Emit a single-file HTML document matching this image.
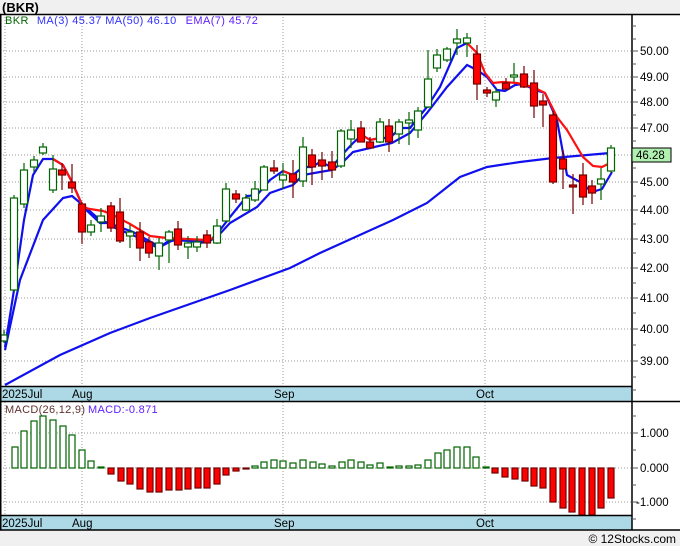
<!DOCTYPE html>
<html><head><meta charset="utf-8"><style>
html,body{margin:0;padding:0;background:#fff;}
svg{display:block;font-family:"Liberation Sans","DejaVu Sans",sans-serif;}
</style></head><body>
<svg width="680" height="546" viewBox="0 0 680 546" xmlns="http://www.w3.org/2000/svg">
<rect x="0" y="0" width="680" height="14" fill="#f0f0f0"/>
<text x="2" y="12" font-size="13" font-weight="bold" fill="#000">(BKR)</text>
<rect x="0" y="530" width="680" height="16" fill="#f0f0f0"/>
<text x="676" y="543" font-size="12" text-anchor="end" fill="#000">© 12Stocks.com</text>

<g stroke="#999" stroke-dasharray="1,2" stroke-width="1">
<line x1="0" y1="51" x2="632" y2="51"/><line x1="0" y1="77" x2="632" y2="77"/>
<line x1="0" y1="102" x2="632" y2="102"/><line x1="0" y1="128" x2="632" y2="128"/>
<line x1="0" y1="155" x2="632" y2="155"/><line x1="0" y1="182" x2="632" y2="182"/>
<line x1="0" y1="210" x2="632" y2="210"/><line x1="0" y1="239" x2="632" y2="239"/>
<line x1="0" y1="268" x2="632" y2="268"/><line x1="0" y1="298" x2="632" y2="298"/>
<line x1="0" y1="329" x2="632" y2="329"/><line x1="0" y1="361" x2="632" y2="361"/>
<line x1="5" y1="14" x2="5" y2="386"/><line x1="82" y1="14" x2="82" y2="386"/>
<line x1="283" y1="14" x2="283" y2="386"/><line x1="485" y1="14" x2="485" y2="386"/>
<line x1="0" y1="433" x2="632" y2="433"/><line x1="0" y1="468" x2="632" y2="468"/><line x1="0" y1="502" x2="632" y2="502"/>
<line x1="5" y1="402" x2="5" y2="516"/><line x1="82" y1="402" x2="82" y2="516"/>
<line x1="283" y1="402" x2="283" y2="516"/><line x1="485" y1="402" x2="485" y2="516"/>
</g>

<text x="5" y="24" font-size="11" letter-spacing="0.4" fill="#060"><tspan>BKR</tspan><tspan fill="#3030ff" dx="8">MA(3)  45.37  MA(50)  46.10</tspan><tspan fill="#6020ff" dx="9">EMA(7)  45.72</tspan></text>

<polyline fill="none" stroke="#1010ee" stroke-width="2.2" points="5,385 60,355 110,333 150,318 230,290 290,268 320,253 393,220 427,203 460,177 487,167 520,162 553,158 610,153"/>
<polyline fill="none" stroke="#1010ee" stroke-width="2.2" points="5,350 20,280 43,220 63,198 72,196 85,207 100,220 133,232 160,247 173,240 207,242 217,237 230,223 257,207 270,193 287,187 293,185 303,175 320,172 332,170 342,163 353,152 370,148 392,143 410,133 427,113 447,87 467,65 477,70 487,77 497,90 505,91 515,85 523,84 535,90 545,93 557,120 567,175 580,182 592,192 602,189 612,172"/>
<polyline fill="none" stroke="#1010ee" stroke-width="2.2" points="5,347 14,290 24,220 33,175 43,159 53,159 63,165 72,182 83,207 100,223 110,223 113,227 137,237 158,248 167,242 180,239 200,243 210,241 220,230 230,217 247,196 257,195 270,180 283,171 293,175 303,167 312,167 320,162 332,167 340,157 353,143 362,135 370,140 380,138 390,138 400,128 410,128 427,107 440,87 457,48 467,43"/>
<g fill="none" stroke="#ff1010" stroke-width="2.2">
<polyline points="53,159 63,165 72,182 83,207 90,209 103,211 113,215 130,224 150,236 167,238 207,240 217,237"/>
<polyline points="467,43 477,53 485,73 493,83 503,82 517,83 533,87 545,93 557,117 567,130 583,157 593,166 602,167 610,163"/>
<polyline points="283,171 293,175"/>
<polyline points="362,135 370,140 380,138"/>
</g>

<g stroke-width="1.2">
<g stroke="#006400" fill="#fff">
<line x1="4" y1="330" x2="4" y2="343"/><rect x="1" y="335" width="6" height="6"/>
<line x1="14" y1="195" x2="14" y2="292"/><rect x="10.5" y="198" width="7" height="92"/>
<line x1="24" y1="163" x2="24" y2="208"/><rect x="20.5" y="170" width="7" height="34"/>
<line x1="34" y1="156" x2="34" y2="172"/><rect x="30.5" y="160" width="7" height="7"/>
<line x1="43" y1="143" x2="43" y2="155"/><rect x="39.5" y="147" width="7" height="6"/>
<line x1="53" y1="155" x2="53" y2="193"/><rect x="49.5" y="169" width="7" height="21"/>
<line x1="91" y1="220" x2="91" y2="236"/><rect x="87.5" y="225" width="7" height="7"/>
<line x1="101" y1="208" x2="101" y2="232"/><rect x="97.5" y="216" width="7" height="6"/>
<line x1="130" y1="225" x2="130" y2="248"/><rect x="126.5" y="232" width="7" height="4"/>
<line x1="159" y1="238" x2="159" y2="270"/><rect x="155.5" y="243" width="7" height="13"/>
<line x1="169" y1="230" x2="169" y2="263"/><rect x="165.5" y="232" width="7" height="8"/>
<line x1="188" y1="236" x2="188" y2="259"/><rect x="184.5" y="243" width="7" height="4"/>
<line x1="197" y1="236" x2="197" y2="252"/><rect x="193.5" y="242" width="7" height="5"/>
<line x1="217" y1="219" x2="217" y2="244"/><rect x="213.5" y="226" width="7" height="17"/>
<line x1="226" y1="183" x2="226" y2="222"/><rect x="222.5" y="189" width="7" height="32"/>
<line x1="246" y1="194" x2="246" y2="211"/><rect x="242.5" y="198" width="7" height="12"/>
<line x1="255" y1="181" x2="255" y2="202"/><rect x="251.5" y="189" width="7" height="11"/>
<line x1="264" y1="165" x2="264" y2="190"/><rect x="260.5" y="167" width="7" height="23"/>
<line x1="283" y1="163" x2="283" y2="189"/><rect x="279.5" y="175" width="7" height="5"/>
<line x1="303" y1="137" x2="303" y2="187"/><rect x="299.5" y="147" width="7" height="34"/>
<line x1="341" y1="129" x2="341" y2="168"/><rect x="337.5" y="131" width="7" height="35"/>
<line x1="351" y1="120" x2="351" y2="148"/><rect x="347.5" y="130" width="7" height="9"/>
<line x1="380" y1="118" x2="380" y2="143"/><rect x="376.5" y="122" width="7" height="20"/>
<line x1="399" y1="119" x2="399" y2="144"/><rect x="395.5" y="122" width="7" height="12"/>
<line x1="409" y1="112" x2="409" y2="145"/><rect x="405.5" y="120" width="7" height="3"/>
<line x1="418" y1="107" x2="418" y2="138"/><rect x="414.5" y="111" width="7" height="19"/>
<line x1="428" y1="50" x2="428" y2="108"/><rect x="424.5" y="79" width="7" height="28"/>
<line x1="437" y1="49" x2="437" y2="72"/><rect x="433.5" y="55" width="7" height="13"/>
<line x1="447" y1="47" x2="447" y2="62"/><rect x="443.5" y="49" width="7" height="11"/>
<line x1="457" y1="29" x2="457" y2="55"/><rect x="453.5" y="39" width="7" height="4"/>
<line x1="467" y1="33" x2="467" y2="57"/><rect x="463.5" y="38" width="7" height="5"/>
<line x1="496" y1="88" x2="496" y2="107"/><rect x="492.5" y="92" width="7" height="8"/>
<line x1="514" y1="63" x2="514" y2="82"/><rect x="510.5" y="75" width="7" height="2"/>
<line x1="601" y1="168" x2="601" y2="200"/><rect x="597.5" y="179" width="7" height="5"/>
<line x1="611" y1="145" x2="611" y2="173"/><rect x="607.5" y="148" width="7" height="23"/>
</g>
<g stroke="#700000" fill="#f00">
<line x1="62" y1="163" x2="62" y2="190"/><rect x="58.5" y="170" width="7" height="5"/>
<line x1="72" y1="164" x2="72" y2="193"/><rect x="68.5" y="182" width="7" height="6"/>
<line x1="82" y1="202" x2="82" y2="244"/><rect x="78.5" y="204" width="7" height="28"/>
<line x1="111" y1="202" x2="111" y2="232"/><rect x="107.5" y="206" width="7" height="22"/>
<line x1="120" y1="198" x2="120" y2="243"/><rect x="116.5" y="212" width="7" height="29"/>
<line x1="140" y1="222" x2="140" y2="261"/><rect x="136.5" y="232" width="7" height="16"/>
<line x1="149" y1="237" x2="149" y2="258"/><rect x="145.5" y="242" width="7" height="11"/>
<line x1="178" y1="221" x2="178" y2="250"/><rect x="174.5" y="229" width="7" height="16"/>
<line x1="207" y1="230" x2="207" y2="248"/><rect x="203.5" y="235" width="7" height="8"/>
<line x1="236" y1="190" x2="236" y2="203"/><rect x="232.5" y="194" width="7" height="5"/>
<line x1="274" y1="160" x2="274" y2="174"/><rect x="270.5" y="168" width="7" height="3"/>
<line x1="293" y1="160" x2="293" y2="198"/><rect x="289.5" y="174" width="7" height="8"/>
<line x1="312" y1="149" x2="312" y2="185"/><rect x="308.5" y="155" width="7" height="12"/>
<line x1="322" y1="152" x2="322" y2="180"/><rect x="318.5" y="160" width="7" height="6"/>
<line x1="332" y1="151" x2="332" y2="178"/><rect x="328.5" y="162" width="7" height="8"/>
<line x1="361" y1="121" x2="361" y2="142"/><rect x="357.5" y="128" width="7" height="14"/>
<line x1="370" y1="137" x2="370" y2="148"/><rect x="366.5" y="142" width="7" height="6"/>
<line x1="389" y1="119" x2="389" y2="152"/><rect x="385.5" y="126" width="7" height="16"/>
<line x1="477" y1="45" x2="477" y2="100"/><rect x="473.5" y="54" width="7" height="30"/>
<line x1="487" y1="87" x2="487" y2="97"/><rect x="483.5" y="90" width="7" height="3"/>
<line x1="506" y1="78" x2="506" y2="90"/><rect x="502.5" y="83" width="7" height="6"/>
<line x1="524" y1="66" x2="524" y2="88"/><rect x="520.5" y="74" width="7" height="13"/>
<line x1="534" y1="70" x2="534" y2="118"/><rect x="530.5" y="83" width="7" height="23"/>
<line x1="543" y1="94" x2="543" y2="127"/><rect x="539.5" y="101" width="7" height="4"/>
<line x1="553" y1="111" x2="553" y2="184"/><rect x="549.5" y="115" width="7" height="67"/>
<line x1="563" y1="150" x2="563" y2="189"/><rect x="559.5" y="159" width="7" height="10"/>
<line x1="573" y1="174" x2="573" y2="214"/><rect x="569.5" y="185" width="7" height="2"/>
<line x1="583" y1="163" x2="583" y2="205"/><rect x="579.5" y="175" width="7" height="22"/>
<line x1="592" y1="180" x2="592" y2="204"/><rect x="588.5" y="186" width="7" height="7"/>
</g>
</g>

<g stroke="#006400" fill="#fff" stroke-width="1.2">
<rect x="12" y="447" width="6" height="21"/><rect x="21" y="431" width="6" height="37"/>
<rect x="31" y="421" width="6" height="47"/><rect x="40" y="416" width="6" height="52"/>
<rect x="50" y="420" width="6" height="48"/><rect x="60" y="426" width="6" height="42"/>
<rect x="69" y="435" width="6" height="33"/><rect x="79" y="450" width="6" height="18"/>
<rect x="88" y="461" width="6" height="7"/><rect x="98" y="467" width="6" height="1"/>
<rect x="252" y="466" width="6" height="2"/><rect x="261" y="462" width="6" height="6"/>
<rect x="271" y="460" width="6" height="8"/><rect x="280" y="461" width="6" height="7"/>
<rect x="290" y="463" width="6" height="5"/><rect x="300" y="460" width="6" height="8"/>
<rect x="310" y="462" width="6" height="6"/><rect x="319" y="464" width="6" height="4"/>
<rect x="329" y="466" width="6" height="2"/><rect x="339" y="462" width="6" height="6"/>
<rect x="348" y="460" width="6" height="8"/><rect x="358" y="462" width="6" height="6"/>
<rect x="367" y="465" width="6" height="3"/><rect x="377" y="463" width="6" height="5"/>
<rect x="387" y="467" width="6" height="1"/><rect x="396" y="466" width="6" height="2"/>
<rect x="406" y="466" width="6" height="2"/><rect x="415" y="465" width="6" height="3"/>
<rect x="425" y="460" width="6" height="8"/><rect x="435" y="453" width="6" height="15"/>
<rect x="444" y="450" width="6" height="18"/><rect x="454" y="447" width="6" height="21"/>
<rect x="464" y="447" width="6" height="21"/><rect x="473" y="457" width="6" height="11"/>
<rect x="483" y="467" width="6" height="1"/>
</g>
<g stroke="#700000" fill="#f00" stroke-width="1.2">
<rect x="108" y="468" width="6" height="6"/><rect x="118" y="468" width="6" height="13"/>
<rect x="127" y="468" width="6" height="16"/><rect x="137" y="468" width="6" height="21"/>
<rect x="147" y="468" width="6" height="24"/><rect x="156" y="468" width="6" height="24"/>
<rect x="166" y="468" width="6" height="22"/><rect x="176" y="468" width="6" height="22"/>
<rect x="185" y="468" width="6" height="21"/><rect x="195" y="468" width="6" height="20"/>
<rect x="204" y="468" width="6" height="20"/><rect x="214" y="468" width="6" height="16"/>
<rect x="223" y="468" width="6" height="7"/><rect x="233" y="468" width="6" height="3"/>
<rect x="243" y="468" width="6" height="1"/>
<rect x="492" y="468" width="6" height="5"/><rect x="502" y="468" width="6" height="9"/>
<rect x="512" y="468" width="6" height="11"/><rect x="522" y="468" width="6" height="13"/>
<rect x="531" y="468" width="6" height="18"/><rect x="540" y="468" width="6" height="20"/>
<rect x="550" y="468" width="6" height="34"/><rect x="560" y="468" width="6" height="40"/>
<rect x="569" y="468" width="6" height="44"/><rect x="579" y="468" width="6" height="47"/>
<rect x="589" y="468" width="6" height="47"/><rect x="598" y="468" width="6" height="40"/>
<rect x="608" y="468" width="6" height="30"/>
</g>
<text x="5" y="413" font-size="11" letter-spacing="0.3" fill="#603030">MACD(26,12,9)</text>
<text x="88" y="413" font-size="11" letter-spacing="0.3" fill="#6020ff">MACD:-0.871</text>

<rect x="0" y="387" width="632" height="14" fill="#add8e6"/>
<rect x="0" y="516" width="632" height="14" fill="#add8e6"/>
<g font-size="11.5" fill="#000">
<text x="2" y="398">2025Jul</text><text x="72" y="398">Aug</text><text x="274" y="398">Sep</text><text x="476" y="398">Oct</text>
<text x="2" y="527">2025Jul</text><text x="72" y="527">Aug</text><text x="274" y="527">Sep</text><text x="476" y="527">Oct</text>
</g>
<g stroke="#000" stroke-width="1.5" fill="none">
<line x1="0" y1="14.5" x2="680" y2="14.5"/>
<line x1="0.75" y1="14" x2="0.75" y2="530"/>
<line x1="632" y1="14" x2="632" y2="530"/>
<line x1="0" y1="386.5" x2="632" y2="386.5"/>
<line x1="0" y1="401.5" x2="680" y2="401.5"/>
<line x1="0" y1="515.5" x2="632" y2="515.5"/>
<line x1="0" y1="530" x2="680" y2="530"/>
</g>
<g stroke="#555" stroke-width="1">
<line x1="632" y1="26" x2="636" y2="26"/><line x1="632" y1="39" x2="636" y2="39"/>
<line x1="632" y1="51" x2="638" y2="51"/><line x1="632" y1="64" x2="636" y2="64"/>
<line x1="632" y1="77" x2="638" y2="77"/><line x1="632" y1="90" x2="636" y2="90"/>
<line x1="632" y1="102" x2="638" y2="102"/><line x1="632" y1="115" x2="636" y2="115"/>
<line x1="632" y1="128" x2="638" y2="128"/><line x1="632" y1="141" x2="636" y2="141"/>
<line x1="632" y1="168" x2="636" y2="168"/>
<line x1="632" y1="182" x2="638" y2="182"/><line x1="632" y1="196" x2="636" y2="196"/>
<line x1="632" y1="210" x2="638" y2="210"/><line x1="632" y1="224" x2="636" y2="224"/>
<line x1="632" y1="239" x2="638" y2="239"/><line x1="632" y1="253" x2="636" y2="253"/>
<line x1="632" y1="268" x2="638" y2="268"/><line x1="632" y1="283" x2="636" y2="283"/>
<line x1="632" y1="298" x2="638" y2="298"/><line x1="632" y1="313" x2="636" y2="313"/>
<line x1="632" y1="329" x2="638" y2="329"/><line x1="632" y1="345" x2="636" y2="345"/>
<line x1="632" y1="361" x2="638" y2="361"/><line x1="632" y1="377" x2="636" y2="377"/>
<line x1="632" y1="390" x2="636" y2="390"/>
<line x1="632" y1="416" x2="636" y2="416"/><line x1="632" y1="433" x2="638" y2="433"/>
<line x1="632" y1="450" x2="636" y2="450"/><line x1="632" y1="468" x2="638" y2="468"/>
<line x1="632" y1="485" x2="636" y2="485"/><line x1="632" y1="502" x2="638" y2="502"/>
<line x1="632" y1="519" x2="636" y2="519"/>
</g>
<g font-size="11.5" fill="#000">
<text x="640" y="55">50.00</text><text x="640" y="81">49.00</text>
<text x="640" y="106">48.00</text><text x="640" y="132">47.00</text>
<text x="640" y="186">45.00</text><text x="640" y="214">44.00</text>
<text x="640" y="243">43.00</text><text x="640" y="272">42.00</text>
<text x="640" y="302">41.00</text><text x="640" y="333">40.00</text>
<text x="640" y="365">39.00</text>
<text x="640" y="437">1.000</text><text x="640" y="472">0.000</text>
<text x="636" y="506">-1.000</text>
</g>
<rect x="632" y="148" width="39" height="14" fill="#b0f0b0" stroke="#000" stroke-width="1"/>
<text x="636" y="159" font-size="11.5" fill="#000">46.28</text>
</svg>
</body></html>
